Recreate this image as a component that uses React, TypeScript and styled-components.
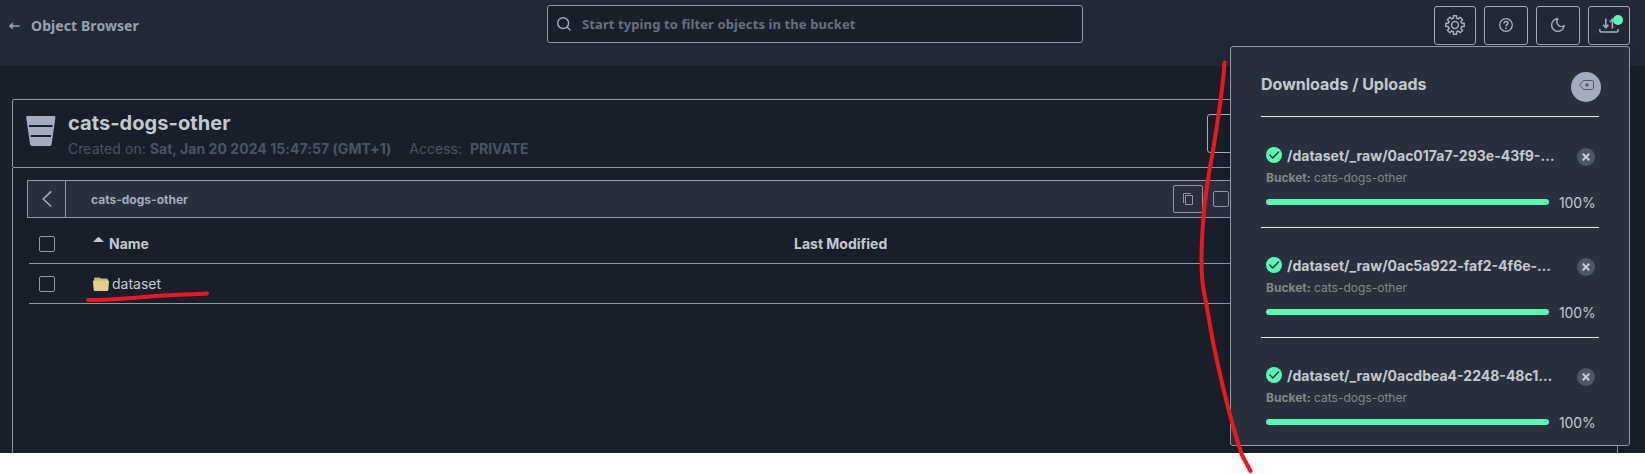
import React from "react";
import styled, { createGlobalStyle } from "styled-components";

const c = {
  page: "#181f2a",
  header: "#222936",
  panel: "#28303e",
  line: "#8e98a9",
  icon: "#a3adbf",
  text: "#c4c9d0",
  muted: "#485465",
  green: "#58fab1",
  red: "#e8191c",
};

const GlobalStyle = createGlobalStyle`
  * { box-sizing: border-box; }
  body { margin: 0; background: #fff; font-family: Inter, "Liberation Sans", sans-serif; }
  svg { display: block; flex: none; }
  button { background: none; padding: 0; margin: 0; font: inherit; color: inherit; }
`;

const Screen = styled.div`
  position: relative;
  width: 1645px;
  height: 474px;
  overflow: hidden;
`;

const Shell = styled.div`
  height: 453px;
  overflow: hidden;
  background: ${c.page};
`;

const Header = styled.header`
  display: grid;
  grid-template-columns: 547px 536px 1fr;
  align-items: start;
  height: 66px;
  padding-right: 15px;
  background: ${c.header};
`;

const BackLink = styled.div`
  display: flex;
  align-items: center;
  gap: 11px;
  height: 51px;
  padding-left: 8px;
  font: 700 14px "Noto Sans", sans-serif;
  letter-spacing: 0.08px;
  color: #98a1b0;
`;

const Search = styled.label`
  display: flex;
  align-items: center;
  gap: 11px;
  height: 38px;
  margin-top: 5px;
  padding-left: 9px;
  border: 1px solid ${c.line};
  border-radius: 3px;
  background: ${c.page};
  color: ${c.icon};
`;

const SearchInput = styled.input`
  flex: 1;
  border: 0;
  outline: 0;
  padding: 0;
  background: none;
  font: 700 13px "Noto Sans", sans-serif;
  letter-spacing: 0.1px;
  &::placeholder { color: #66707f; opacity: 1; }
`;

const Actions = styled.div`
  display: flex;
  justify-content: flex-end;
  gap: 8px;
  padding-top: 6px;
`;

const IconButton = styled.button<{ $w: number }>`
  position: relative;
  display: flex;
  align-items: center;
  justify-content: center;
  width: ${(p) => p.$w}px;
  height: 39px;
  padding-bottom: 1px;
  border: 1px solid ${c.icon};
  border-radius: 3px;
  color: ${c.icon};
`;

const Dot = styled.span`
  position: absolute;
  top: 8px;
  right: 6px;
  width: 10px;
  height: 10px;
  border-radius: 50%;
  background: ${c.green};
`;

const Content = styled.main`
  width: 1606px;
  margin: 33px 0 0 12px;
`;

const BucketHeader = styled.section`
  display: flex;
  align-items: flex-start;
  height: 69px;
  padding: 0 17px 0 13px;
  border: 1px solid ${c.line};
  border-radius: 2px;
`;

const BucketIconSlot = styled.div`
  width: 42px;
  padding-top: 16px;
`;

const BucketInfo = styled.div`
  flex: 1;
`;

const BucketTitle = styled.h1`
  margin: 11px 0 0;
  font-size: 20px;
  font-weight: 700;
  line-height: 24px;
  letter-spacing: 0.06px;
  color: ${c.text};
`;

const BucketMeta = styled.div`
  display: flex;
  gap: 18px;
  margin-top: 4px;
  font-size: 14px;
  line-height: 20px;
  color: ${c.muted};
`;

const Created = styled.span`
  letter-spacing: 0.05px;
`;

const Ghost = styled.button`
  width: 393px;
  height: 39px;
  margin-top: 14px;
  border: 1px solid ${c.icon};
  border-radius: 3px;
`;

const Browser = styled.section`
  height: 340px;
  padding: 12px 14px;
  border: solid ${c.line};
  border-width: 0 1px;
`;

const PathBar = styled.div`
  display: flex;
  align-items: center;
  height: 38px;
  border: 1px solid ${c.line};
  background: ${c.panel};
`;

const PathBack = styled.button`
  display: flex;
  align-items: center;
  justify-content: center;
  width: 38px;
  height: 36px;
  border: 0;
  border-right: 1px solid ${c.line};
  color: ${c.icon};
`;

const PathText = styled.span`
  flex: 1;
  padding-left: 25px;
  font-size: 12px;
  font-weight: 700;
  color: #a3adbf;
`;

const CopyButton = styled.button`
  display: flex;
  align-items: center;
  justify-content: center;
  width: 30px;
  height: 28px;
  border: 1px solid ${c.line};
  border-radius: 2px;
  color: ${c.line};
`;

const Checkbox = styled.span`
  width: 16px;
  height: 16px;
  border: 1px solid ${c.line};
  border-radius: 2px;
`;

const PathCheck = styled.div`
  display: flex;
  width: 399px;
  padding-left: 10px;
`;

const Row = styled.div<{ $h: number; $head?: boolean }>`
  display: grid;
  grid-template-columns: 54px 701px 1fr;
  align-items: center;
  height: ${(p) => p.$h}px;
  margin-left: 2px;
  padding-left: 10px;
  padding-top: ${(p) => (p.$head ? 6 : 0)}px;
  border-bottom: 1px solid ${c.line};
  font-size: 14px;
  font-weight: ${(p) => (p.$head ? 700 : 400)};
  color: ${c.text};
`;

const Cell = styled.div<{ $gap: number }>`
  display: flex;
  align-items: center;
  gap: ${(p) => p.$gap}px;
`;

const SortMark = styled.svg`
  margin-bottom: 8px;
`;

const Panel = styled.aside`
  position: absolute;
  left: 1230px;
  top: 46px;
  width: 400px;
  height: 400px;
  padding: 0 30px;
  overflow: hidden;
  border: 1px solid ${c.line};
  border-radius: 3px;
  background: ${c.panel};
  box-shadow: 0 0 10px rgba(0, 0, 0, 0.15);
`;

const PanelHead = styled.div`
  display: flex;
  align-items: center;
  justify-content: space-between;
  height: 69px;
  padding: 11px 0 0;
  font-size: 16px;
  font-weight: 700;
  color: ${c.text};
`;

const PanelTitle = styled.span`
  padding-bottom: 6px;
`;

const ClearButton = styled.button`
  display: flex;
  align-items: center;
  justify-content: center;
  width: 30px;
  height: 30px;
  margin: 0 -2px 0 0;
  padding: 0 0 4px 1px;
  border: 0;
  border-radius: 50%;
  background: ${c.icon};
  color: #4d596b;
`;

const Transfer = styled.div<{ $first?: boolean }>`
  height: ${(p) => (p.$first ? 111 : 110)}px;
  padding: ${(p) => (p.$first ? 29 : 28)}px 4px 0 5px;
  border-top: 1px solid #eaeaea;
`;

const TransferTop = styled.div`
  display: flex;
  align-items: center;
  height: 18px;
`;

const FileName = styled.span`
  flex: 1;
  padding: 1px 0 0 5px;
  font-size: 14px;
  font-weight: 700;
  line-height: 18px;
  color: ${c.text};
`;

const RemoveButton = styled.button`
  display: flex;
  align-items: center;
  justify-content: center;
  width: 18px;
  height: 18px;
  margin-top: 3px;
  border: 0;
  border-radius: 50%;
  background: #4b586a;
  color: ${c.text};
`;

const BucketLine = styled.div`
  margin-top: 6px;
  font-size: 12px;
  line-height: 16px;
  color: #85878b;
`;

const Progress = styled.div`
  display: flex;
  align-items: center;
  gap: 10px;
  height: 20px;
  margin-top: 6px;
  font-size: 14px;
  letter-spacing: -0.1px;
  color: ${c.text};
`;

const Track = styled.div`
  flex: none;
  width: 283px;
  height: 6px;
  border-radius: 3px;
  background: ${c.green};
`;

const Markings = styled.svg`
  position: absolute;
  inset: 0;
  pointer-events: none;
`;

const ArrowLeft = () => (
  <svg width="12" height="10" viewBox="0 0 12 10" fill="none" stroke="currentColor" strokeWidth="1.5" strokeLinecap="round">
    <path d="M11 5H2" />
    <path d="M4.500 2 1.200 5l3.300 3z" fill="currentColor" strokeWidth=".6" strokeLinejoin="round" />
  </svg>
);

const SearchIcon = () => (
  <svg width="14" height="14" viewBox="0 0 15 15" fill="none" stroke="currentColor" strokeWidth="1.5" strokeLinecap="round">
    <circle cx="6.6" cy="6.6" r="5.8" />
    <path d="m11 11 3 3" />
  </svg>
);

const GearIcon = () => (
  <svg width="20" height="20" viewBox="0 0 20 20" fill="none" stroke="currentColor" strokeWidth="1.5" strokeLinejoin="round">
    <path d="M8.400.8h3.200v2.300l1.800.8L15.100 2.300l2.500 2.500-1.700 1.700.8 1.800h2.500v3.300h-2.500l-.8 1.900 1.700 1.700-2.500 2.500-1.700-1.700-1.800.8v2.400H8.400v-2.400l-1.800-.8-1.700 1.700-2.500-2.500 1.700-1.700-.8-1.900H.8V8.300h2.500l.8-1.800-1.700-1.700 2.500-2.500 1.700 1.600 1.800-.8z" />
    <circle cx="10" cy="10" r="3.400" />
  </svg>
);

const HelpIcon = () => (
  <svg width="14" height="14" viewBox="0 0 14 14" fill="none" stroke="currentColor" strokeWidth="1.300">
    <circle cx="7" cy="7" r="6.300" />
    <path d="M5 5.500C5 4.200 5.800 3.600 7 3.600s2 .7 2 1.700C9 6.700 7 6.700 7 8.400" strokeWidth="1.500" />
    <path d="M7 9.400v1.500" strokeWidth="1.600" />
  </svg>
);

const MoonIcon = () => (
  <svg width="14" height="14" viewBox="0 0 14 14" fill="none" stroke="currentColor" strokeWidth="1.400" strokeLinejoin="round">
    <path d="M6.800.8A6.300 6.300 0 1 0 13.200 7.500C11.800 8.900 9.300 9.100 7.700 7.600 5.800 5.900 5.400 3 6.800.8Z" />
  </svg>
);

const TransferIcon = () => (
  <svg width="20" height="16" viewBox="0 0 20 16" fill="none" stroke="currentColor" strokeWidth="1.600">
    <path d="M.9 12v1.700c0 .8.500 1.300 1.300 1.300h15.600c.8 0 1.300-.5 1.300-1.300V12" strokeWidth="1.600" />
    <path d="M6.800 1.500v9M4.200 7.800l2.600 2.900 2.600-2.900M13.400 11.500V2.500M10.800 5l2.600-2.900L16 5" />
  </svg>
);

const BucketIcon = () => (
  <svg width="30" height="30" viewBox="0 0 30 30" fill={c.icon}>
    <path d="M1.500 0h26.600c.9 0 1.400.7 1.300 1.500L25.700 28c-.2 1.300-.9 2-2 2H6c-1.100 0-1.800-.7-2-2L.2 1.500C.1.700.6 0 1.500 0Z" />
    <path d="M3 9h23.500v2H3zM4.700 19h20.300v2H4.700z" fill={c.page} />
  </svg>
);

const ChevronLeft = () => (
  <svg width="10" height="16" viewBox="0 0 10 16" fill="none" stroke="currentColor" strokeWidth="1.600" strokeLinecap="round" strokeLinejoin="round">
    <path d="M8.700.9 1.200 8l7.500 7" />
  </svg>
);

const CopyIcon = () => (
  <svg width="10" height="12" viewBox="0 0 10 12" fill="none" stroke="currentColor">
    <path d="M.5 10V.5H8" />
    <path d="M2.500 2.500h7v9h-7z" />
  </svg>
);

const FolderIcon = () => (
  <svg width="16" height="14" viewBox="0 0 16 14">
    <path d="M1 4V2.200C1 1 1.500.4 2.500.4h4L8 1.600h5.500c1 0 1.500.6 1.500 1.500V5H1z" fill="#c9b27a" />
    <path d="M1 3.500h14c.7 0 1 .4 1 1l-.6 8c-.1.900-.6 1.500-1.500 1.500H2.100c-.9 0-1.400-.6-1.500-1.500L0 4.500c0-.6.300-1 1-1Z" fill="#e6d089" />
  </svg>
);

const CheckIcon = () => (
  <svg width="16" height="16" viewBox="0 0 16 16">
    <circle cx="8" cy="8" r="8" fill={c.green} />
    <path d="m3.800 8 2.900 3 5.800-6" fill="none" stroke={c.panel} strokeWidth="1.500" strokeLinecap="round" strokeLinejoin="round" />
  </svg>
);

const CrossIcon = () => (
  <svg width="8" height="8" viewBox="0 0 8 8" stroke="currentColor" strokeWidth="2.200">
    <path d="m.7.7 6.600 6.600M7.300.7.7 7.300" />
  </svg>
);

const BackspaceIcon = () => (
  <svg width="15" height="10" viewBox="0 0 15 10" fill="none" stroke="currentColor">
    <path d="M4.500.5h8.500c.9 0 1.500.7 1.500 1.500v6c0 .8-.6 1.500-1.500 1.500H4.500L.6 5z" />
    <path d="m6.700 3.700 2.600 2.600m0-2.600L6.700 6.300" strokeWidth="1.400" />
  </svg>
);

const transfers = [
  "/dataset/_raw/0ac017a7-293e-43f9-…",
  "/dataset/_raw/0ac5a922-faf2-4f6e-…",
  "/dataset/_raw/0acdbea4-2248-48c1…",
];

export default function App() {
  return (
    <Screen>
      <GlobalStyle />
      <Shell>
        <Header>
          <BackLink>
            <ArrowLeft />
            Object Browser
          </BackLink>
          <Search>
            <SearchIcon />
            <SearchInput placeholder="Start typing to filter objects in the bucket" />
          </Search>
          <Actions>
            <IconButton $w={42}><GearIcon /></IconButton>
            <IconButton $w={44}><HelpIcon /></IconButton>
            <IconButton $w={44}><MoonIcon /></IconButton>
            <IconButton $w={42}><TransferIcon /><Dot /></IconButton>
          </Actions>
        </Header>
        <Content>
          <BucketHeader>
            <BucketIconSlot><BucketIcon /></BucketIconSlot>
            <BucketInfo>
              <BucketTitle>cats-dogs-other</BucketTitle>
              <BucketMeta>
                <Created>Created on: <b>Sat, Jan 20 2024 15:47:57 (GMT+1)</b></Created>
                <span>Access: &nbsp;<b>PRIVATE</b></span>
              </BucketMeta>
            </BucketInfo>
            <Ghost />
          </BucketHeader>
          <Browser>
            <PathBar>
              <PathBack><ChevronLeft /></PathBack>
              <PathText>cats-dogs-other</PathText>
              <CopyButton><CopyIcon /></CopyButton>
              <PathCheck><Checkbox /></PathCheck>
            </PathBar>
            <Row $h={46} $head>
              <Checkbox />
              <Cell $gap={5}>
                <SortMark width="11" height="5" viewBox="0 0 11 5" fill={c.text}><path d="M0 5 4.500.6c.6-.6 1.400-.6 2 0L11 5z" /></SortMark>
                Name
              </Cell>
              <span>Last Modified</span>
            </Row>
            <Row $h={40}>
              <Checkbox />
              <Cell $gap={3}><FolderIcon />dataset</Cell>
            </Row>
          </Browser>
        </Content>
      </Shell>
      <Panel>
        <PanelHead>
          <PanelTitle>Downloads / Uploads</PanelTitle>
          <ClearButton><BackspaceIcon /></ClearButton>
        </PanelHead>
        {transfers.map((name, i) => (
          <Transfer key={name} $first={i === 0}>
            <TransferTop>
              <CheckIcon />
              <FileName>{name}</FileName>
              <RemoveButton><CrossIcon /></RemoveButton>
            </TransferTop>
            <BucketLine><b>Bucket:</b> cats-dogs-other</BucketLine>
            <Progress><Track />100%</Progress>
          </Transfer>
        ))}
      </Panel>
      <Markings width="1645" height="474" fill="none" stroke={c.red} strokeWidth="4" strokeLinecap="round" strokeLinejoin="round">
        <path d="M1224.500 62.500C1223.500 85 1219 112 1213 151C1207 181 1204 205 1202.500 230C1201 255 1201 278 1204 292C1207 306 1210 327 1214 347C1221 380 1230 420 1242 455L1250.500 471" />
        <path d="M88 300C120 300 135 297 165 295.500C180 294.500 195 294.500 207 293.500" />
      </Markings>
    </Screen>
  );
}
